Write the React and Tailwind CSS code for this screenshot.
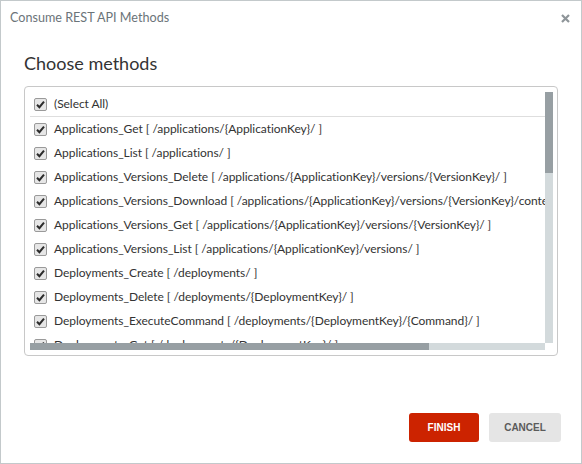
import React from 'react';

const methods = [
  'Applications_Get [ /applications/{ApplicationKey}/ ]',
  'Applications_List [ /applications/ ]',
  'Applications_Versions_Delete [ /applications/{ApplicationKey}/versions/{VersionKey}/ ]',
  'Applications_Versions_Download [ /applications/{ApplicationKey}/versions/{VersionKey}/content/ ]',
  'Applications_Versions_Get [ /applications/{ApplicationKey}/versions/{VersionKey}/ ]',
  'Applications_Versions_List [ /applications/{ApplicationKey}/versions/ ]',
  'Deployments_Create [ /deployments/ ]',
  'Deployments_Delete [ /deployments/{DeploymentKey}/ ]',
  'Deployments_ExecuteCommand [ /deployments/{DeploymentKey}/{Command}/ ]',
  'Deployments_Get [ /deployments/{DeploymentKey}/ ]',
];

const Check = () => (
  <span className="w-[13px] h-[13px] shrink-0 rounded-[2px] border border-[#9a9a9a] bg-[#e6e6e6] flex items-center justify-center">
    <svg width="9" height="9" viewBox="0 0 9 9">
      <path d="M1 4.8 L3.4 7.2 L8 1.6" fill="none" stroke="#2b2b2b" strokeWidth="2" />
    </svg>
  </span>
);

const Row = ({ label }) => (
  <div className="h-[24px] flex items-center gap-[7px] pl-[4px] whitespace-nowrap">
    <Check />
    <span className="tracking-[-0.05px]">{label}</span>
  </div>
);

export default function App() {
  return (
    <div className="w-[582px] h-[464px] bg-white border border-[#c3c9cb] flex flex-col text-[#333] font-['Segoe_UI','Lato',sans-serif]">
      <div className="h-[34px] flex items-center justify-between pl-[9px] pr-[11px]">
        <span className="text-[12.6px] text-[#6b7479]">Consume REST API Methods</span>
        <svg width="9" height="9" viewBox="0 0 9 9">
          <path d="M1 1 L8 8 M8 1 L1 8" stroke="#8e9599" strokeWidth="2.2" />
        </svg>
      </div>

      <div className="px-[23px] pt-[15px]">
        <h1 className="text-[18px] leading-[26px] text-[#333]">Choose methods</h1>

        <div className="mt-[10px] h-[270px] border border-[#c8c8c8] rounded-[4px] p-[5px] pr-[4px]">
          <div className="h-full grid grid-cols-[1fr_8px] grid-rows-[1fr_7px]">
            <div className="overflow-hidden text-[12px]">
              <div className="border-b border-[#dedede]">
                <Row label="(Select All)" />
              </div>
              {methods.map((m) => (
                <Row key={m} label={m} />
              ))}
            </div>
            <div className="bg-[#d3dadc]">
              <div className="h-[81px] bg-[#979fa3]" />
            </div>
            <div className="bg-[#d3dadc]">
              <div className="w-[399px] h-full bg-[#979fa3]" />
            </div>
            <div className="bg-white" />
          </div>
        </div>
      </div>

      <div className="flex-1" />

      <div className="flex justify-end gap-[10px] pr-[20px] pb-[21px]">
        <button className="w-[70px] h-[29px] rounded-[3px] bg-[#cc2300] text-white text-[10px] font-bold font-['Liberation_Sans',sans-serif]">
          FINISH
        </button>
        <button className="w-[72px] h-[29px] rounded-[3px] bg-[#e5e5e5] text-[#5b5b5b] text-[10px] font-bold font-['Liberation_Sans',sans-serif]">
          CANCEL
        </button>
      </div>
    </div>
  );
}
